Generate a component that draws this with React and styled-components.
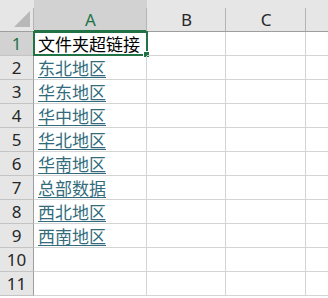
import React from "react";
import styled, { createGlobalStyle } from "styled-components";

const rows = [
  { text: "文件夹超链接", link: false },
  { text: "东北地区", link: true },
  { text: "华东地区", link: true },
  { text: "华中地区", link: true },
  { text: "华北地区", link: true },
  { text: "华南地区", link: true },
  { text: "总部数据", link: true },
  { text: "西北地区", link: true },
  { text: "西南地区", link: true },
  { text: "", link: false },
  { text: "", link: false },
];

const columns = ["A", "B", "C", ""];

export default function App() {
  return (
    <>
      <GlobalStyle />
      <Sheet>
        <Corner>
          <Triangle />
        </Corner>
        {columns.map((c, i) => (
          <ColHeader key={c + i} $active={i === 0}>
            {c}
          </ColHeader>
        ))}

        {rows.map((r, i) => (
          <React.Fragment key={i}>
            <RowHeader $active={i === 0}>{i + 1}</RowHeader>
            <Cell>
              {r.link ? <LinkText>{r.text}</LinkText> : r.text}
              {i === 0 && (
                <Selection>
                  <Handle />
                </Selection>
              )}
            </Cell>
            <Cell />
            <Cell />
            <Cell $last />
          </React.Fragment>
        ))}
      </Sheet>
    </>
  );
}

const GlobalStyle = createGlobalStyle`
  html, body {
    margin: 0;
    padding: 0;
    background: #ffffff;
    overflow: hidden;
  }
  body {
    font-family: "Noto Sans", "Noto Sans CJK SC", sans-serif;
  }
`;

const Sheet = styled.div`
  display: grid;
  grid-template-columns: 34px 113px 79px 80px 1fr;
  grid-template-rows: 32px repeat(11, 24px);
  width: 328px;
  background: #ffffff;
`;

const Corner = styled.div`
  position: relative;
  background: #e6e6e6;
  border-bottom: 1px solid #9e9e9e;
`;

const Triangle = styled.div`
  position: absolute;
  right: 4px;
  bottom: 4px;
  width: 0;
  height: 0;
  border-left: 16px solid transparent;
  border-bottom: 16px solid #b8b8b8;
`;

const ColHeader = styled.div`
  position: relative;
  display: flex;
  align-items: center;
  justify-content: center;
  padding-top: 8px;
  box-sizing: border-box;
  background: ${(p) => (p.$active ? "#d2d2d2" : "#e6e6e6")};
  color: ${(p) => (p.$active ? "#217346" : "#262626")};
  font-size: 17px;
  border-bottom: ${(p) => (p.$active ? "2px solid #217346" : "1px solid #9e9e9e")};

  &::before {
    content: "";
    position: absolute;
    left: -1px;
    top: 8px;
    bottom: 0;
    width: 1px;
    background: #b4b4b4;
  }
`;

const RowHeader = styled.div`
  display: flex;
  align-items: center;
  justify-content: center;
  box-sizing: border-box;
  background: ${(p) => (p.$active ? "#d2d2d2" : "#e6e6e6")};
  color: ${(p) => (p.$active ? "#217346" : "#262626")};
  font-size: 17px;
  border-right: 1px solid #9e9e9e;
  border-bottom: 1px solid #c4c4c4;
`;

const Cell = styled.div`
  position: relative;
  display: flex;
  align-items: center;
  box-sizing: border-box;
  padding-left: 4px;
  font-size: 17px;
  color: #000000;
  white-space: nowrap;
  border-right: ${(p) => (p.$last ? "none" : "1px solid #d4d4d4")};
  border-bottom: 1px solid #d4d4d4;
`;

const LinkText = styled.span`
  color: #326c7c;
  text-decoration: underline;
  text-underline-offset: 2px;
`;

const Selection = styled.div`
  position: absolute;
  left: -1px;
  top: -1px;
  right: -2px;
  bottom: -1px;
  border: 2px solid #217346;
  pointer-events: none;
`;

const Handle = styled.div`
  position: absolute;
  right: -4px;
  bottom: -4px;
  width: 5px;
  height: 5px;
  background: #217346;
  border: 1px solid #ffffff;
`;
